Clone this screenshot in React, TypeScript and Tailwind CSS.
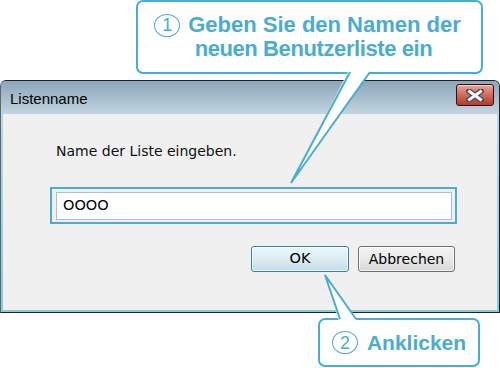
import React from "react";

const BLUE = "#49acd2";

function NumCircle({ n }: { n: string }) {
  return (
    <div className="w-[26px] h-[23px] rounded-[50%] border-[1.5px] border-[#49acd2] flex items-center justify-center text-[#49acd2] text-[18px] leading-none font-normal font-['Liberation_Sans',Arial,sans-serif]">
      {n}
    </div>
  );
}

export default function App() {
  return (
    <div className="relative w-[500px] h-[368px] bg-white overflow-hidden">
      {/* Callout 1 */}
      <div className="ml-[136px] w-[347px] h-[74px] border-2 border-[#49acd2] rounded-[7px] bg-white flex flex-col items-center justify-center font-['Liberation_Sans',Arial,sans-serif] font-bold text-[22px] leading-[24px] text-[#49acd2]">
        <div className="flex items-center gap-[8px] ml-[-4px]">
          <NumCircle n="1" />
          <span>Geben Sie den Namen der</span>
        </div>
        <div className="pl-[8px] tracking-[-0.4px]">neuen Benutzerliste ein</div>
      </div>

      {/* Dialog */}
      <div className="mt-[6px] w-[500px] h-[233px] flex flex-col rounded-t-[6px] border border-[#1c242b] border-l-[#5a6874] bg-gradient-to-b from-[#c3d7e3] to-[#86ccd9]">
        <div className="h-[33px] shrink-0 flex items-center justify-between pl-[9px] pr-[5px] rounded-t-[5px] bg-gradient-to-b from-[#8ca6b8] to-[#c2d5e1]">
          <span className="text-[15px] text-black font-['Liberation_Sans',Arial,sans-serif] leading-none mt-[1px]">
            Listenname
          </span>
          <div className="w-[38px] h-[22px] mt-[-5px] rounded-[3px] border border-[#3a0d0d] bg-gradient-to-b from-[#e6a79d] via-[#d06a5e] to-[#b5392c] flex items-center justify-center shadow-[inset_0_1px_0_rgba(255,255,255,0.5)]">
            <svg width="18" height="13" viewBox="0 0 18 13">
              <path d="M3 2 L15 11 M15 2 L3 11" stroke="#4a4a52" strokeWidth="5.5" strokeLinecap="square" />
              <path d="M3.5 2.5 L14.5 10.5 M14.5 2.5 L3.5 10.5" stroke="#ffffff" strokeWidth="3" strokeLinecap="square" />
            </svg>
          </div>
        </div>
        <div className="flex-1 mx-[2px] mb-[2px] bg-[#f0f0f0] flex flex-col font-['DejaVu_Sans',Verdana,sans-serif]">
          <div className="pt-[28px] pl-[53px] text-[14px] leading-[18px] text-[#111]">
            Name der Liste eingeben.
          </div>
          <div className="mt-[27px] ml-[47px] w-[407px] h-[37px] border-2 border-[#49acd2] pl-[4px] pr-[3px] pt-[3px] pb-[2px]">
            <div className="w-full h-full bg-white border border-[#a9bfcc] flex items-center pl-[6px] text-[14.5px] text-black">
              OOOO
            </div>
          </div>
          <div className="mt-[22px] flex justify-end gap-[9px] pr-[42px]">
            <div className="w-[98px] h-[26px] rounded-[3px] border border-[#2f86a6] bg-gradient-to-b from-[#eef7fb] via-[#dcecf3] to-[#c2dde8] shadow-[inset_0_0_0_1px_rgba(255,255,255,0.7)] flex items-center justify-center text-[14.5px] text-black">
              OK
            </div>
            <div className="w-[97px] h-[26px] rounded-[3px] border border-[#707070] bg-gradient-to-b from-[#f4f4f4] via-[#e9e9e9] to-[#d6d6d6] shadow-[inset_0_0_0_1px_rgba(255,255,255,0.7)] flex items-center justify-center text-[14px] text-black">
              Abbrechen
            </div>
          </div>
        </div>
      </div>

      {/* Callout 2 */}
      <div className="mt-[5px] ml-[318px] w-[162px] h-[49px] border-2 border-[#49acd2] rounded-[7px] bg-white flex items-center justify-center gap-[9px] font-['Liberation_Sans',Arial,sans-serif] font-bold text-[21px] text-[#49acd2]">
        <NumCircle n="2" />
        <span className="mt-[1px]">Anklicken</span>
      </div>

      {/* Tails */}
      <svg className="absolute inset-0 pointer-events-none" width="500" height="368" viewBox="0 0 500 368">
        <polygon points="349,70 291,183 371,70" fill="#ffffff" />
        <polyline points="350,72 291,183 370,72" fill="none" stroke={BLUE} strokeWidth="2" strokeLinejoin="miter" />
        <polygon points="339,321 325,275 357,321" fill="#ffffff" />
        <polyline points="340,319 325,275 356,319" fill="none" stroke={BLUE} strokeWidth="2" strokeLinejoin="miter" />
      </svg>
    </div>
  );
}
